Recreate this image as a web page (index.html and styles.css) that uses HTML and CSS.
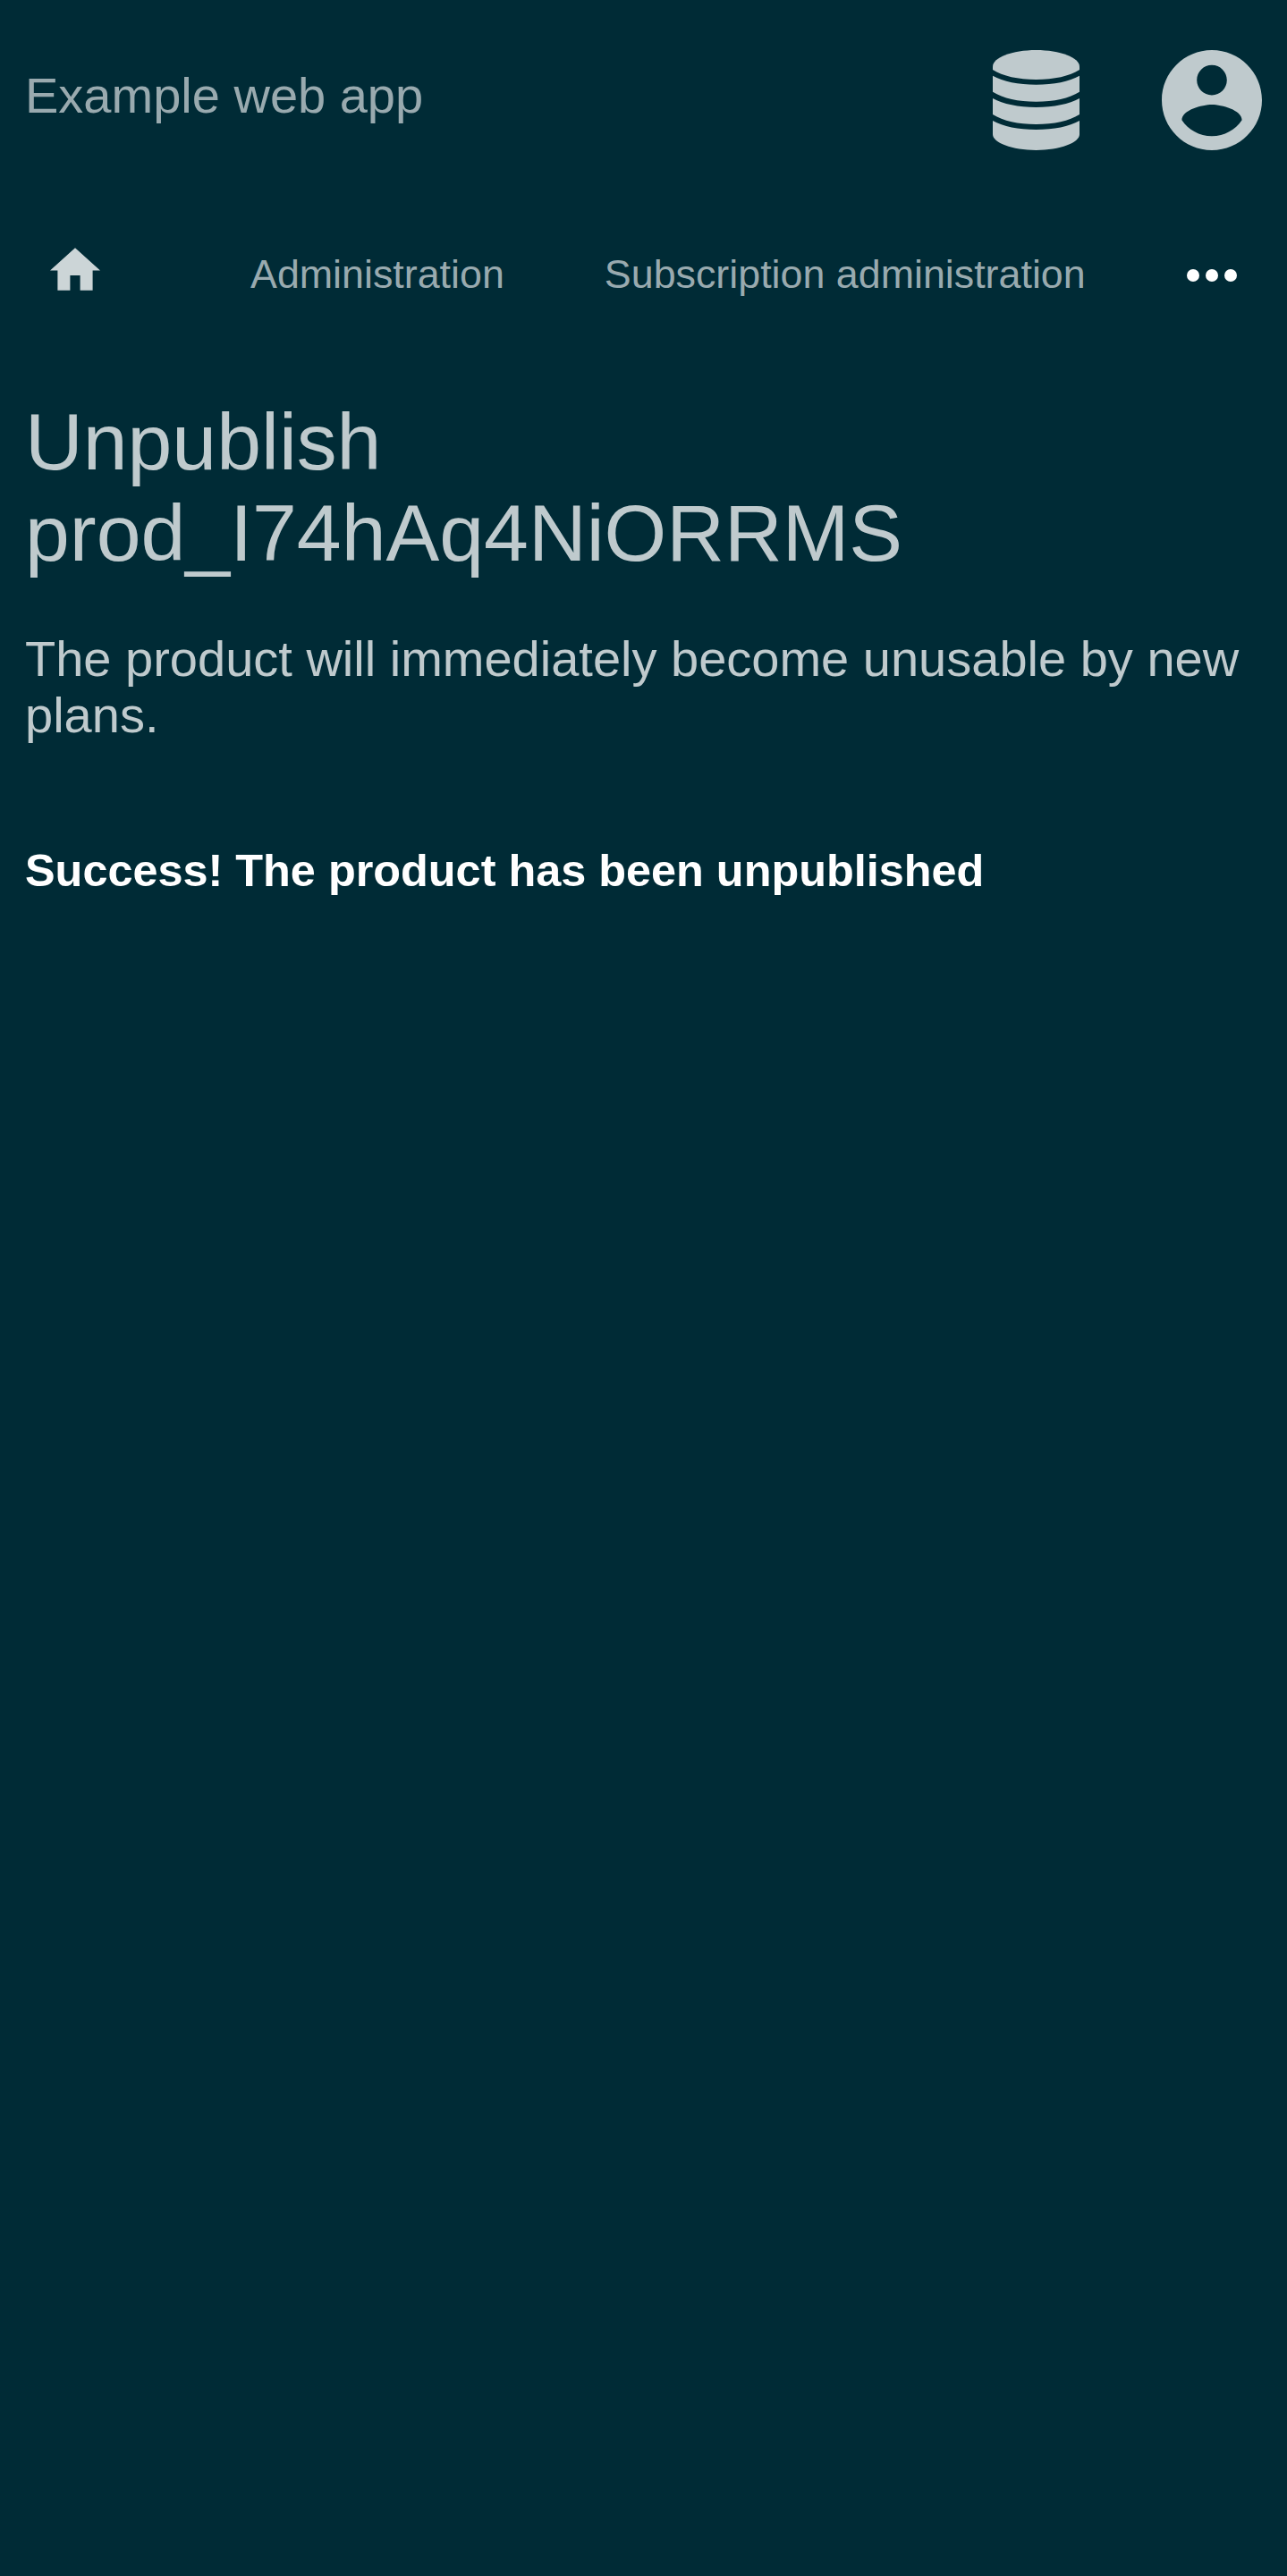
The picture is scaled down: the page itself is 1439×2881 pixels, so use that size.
FILE: index.html
```html
<!DOCTYPE html>
<html lang="en">
<head>
<meta charset="utf-8">
<title>Unpublish product</title>
<link rel="stylesheet" href="styles.css">
</head>
<body>
<header class="header">
  <a class="brand">Example web app</a>
  <div class="menus">
    <svg class="icon-database" viewBox="0 0 290 336" preserveAspectRatio="none">
      <path d="M0 55C0 25 65 0 145 0S290 25 290 55V66C257 87 205 99 145 99S33 87 0 66Z"/>
      <path d="M0 86C35 105 85 116 145 116S255 105 290 86V140C255 162 205 173 145 173S35 162 0 140Z"/>
      <path d="M0 162C35 181 85 192 145 192S255 181 290 162V216C255 238 205 249 145 249S35 238 0 216Z"/>
      <path d="M0 237C35 257 85 267 145 267S255 257 290 237V283C290 311 225 336 145 336S0 311 0 283Z"/>
    </svg>
    <svg class="icon-account" viewBox="2 2 20 20">
      <path d="M12 2C6.48 2 2 6.48 2 12s4.48 10 10 10 10-4.48 10-10S17.52 2 12 2zm0 3c1.66 0 3 1.34 3 3s-1.34 3-3 3-3-1.34-3-3 1.34-3 3-3zm0 14.2c-2.5 0-4.71-1.28-6-3.22.03-1.99 4-3.08 6-3.08 1.99 0 5.97 1.09 6 3.08-1.29 1.94-3.5 3.22-6 3.22z"/>
    </svg>
  </div>
</header>
<nav class="nav">
  <svg class="icon-home" viewBox="2 3 20 17"><path d="M10 20v-6h4v6h5v-8h3L12 3 2 12h3v8z"/></svg>
  <a class="nav-link">Administration</a>
  <a class="nav-link">Subscription administration</a>
  <svg class="icon-more" viewBox="0 0 16 4"><circle cx="2" cy="2" r="2"/><circle cx="8" cy="2" r="2"/><circle cx="14" cy="2" r="2"/></svg>
</nav>
<main class="content">
  <h1 class="title">Unpublish prod_I74hAq4NiORRMS</h1>
  <p class="description">The product will immediately become unusable by new plans.</p>
  <p class="message">Success! The product has been unpublished</p>
</main>
</body>
</html>
```
FILE: styles.css
```css
* {
  box-sizing: border-box;
}

body {
  margin: 0;
  min-height: 2881px;
  background: #002b36;
  font-family: "Liberation Sans", Arial, sans-serif;
  color: #bfcacd;
}

.header {
  display: flex;
  justify-content: space-between;
  align-items: flex-start;
  height: 224px;
  padding: 56px 28px 0;
}

.brand {
  margin-top: 19px;
  font-size: 56px;
  line-height: 63px;
  color: #99aaaf;
}

.menus {
  display: flex;
  gap: 92px;
  fill: #bfcacd;
}

.icon-database {
  width: 97px;
  height: 112px;
}

.icon-account {
  width: 112px;
  height: 112px;
}

.nav {
  display: flex;
  align-items: flex-start;
  height: 219px;
  padding: 53px 56px 0;
}

.icon-home {
  width: 56px;
  height: 48px;
  margin-right: 56px;
  fill: #ccd5d7;
}

.nav-link {
  margin: 4px 0 0 112px;
  font-size: 44.8px;
  line-height: 51px;
  white-space: nowrap;
  color: #99aaaf;
}

.icon-more {
  width: 56px;
  height: 14px;
  margin: 24px 0 0 auto;
  fill: #fff;
}

.content {
  padding: 0 28px;
}

.title {
  margin: 0;
  font-size: 89.6px;
  font-weight: 400;
  line-height: 102px;
}

.description {
  margin: 58px 0 0;
  font-size: 56px;
  line-height: 63px;
}

.message {
  margin: 114px 0 0;
  font-size: 50.4px;
  font-weight: 700;
  line-height: 57px;
  color: #fff;
}
```
